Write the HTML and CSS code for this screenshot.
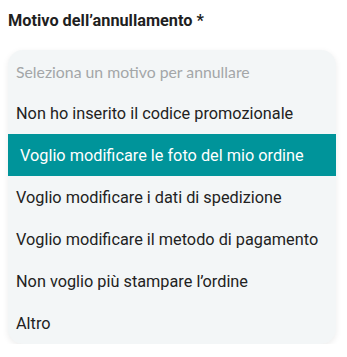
FILE: index.html
```html
<!DOCTYPE html>
<html lang="it">
<head>
<meta charset="utf-8">
<link rel="stylesheet" href="styles.css">
</head>
<body>
<div class="field">
  <div class="label">Motivo dell’annullamento *</div>
  <ul class="menu">
    <li class="option placeholder">Seleziona un motivo per annullare</li>
    <li class="option">Non ho inserito il codice promozionale</li>
    <li class="option selected">Voglio modificare le foto del mio ordine</li>
    <li class="option">Voglio modificare i dati di spedizione</li>
    <li class="option">Voglio modificare il metodo di pagamento</li>
    <li class="option">Non voglio più stampare l’ordine</li>
    <li class="option">Altro</li>
  </ul>
</div>
</body>
</html>
```
FILE: styles.css
```css
html, body {
  margin: 0;
  padding: 0;
  background: #ffffff;
}
body {
  font-family: Roboto, "Liberation Sans", sans-serif;
  color: #222222;
}
.field {
  padding: 11px 11px 0 8px;
}
.label {
  font-size: 16.3px;
  font-weight: 700;
  line-height: 20px;
  color: #1f1f1f;
}
.menu {
  list-style: none;
  margin: 19px 0 0 0;
  padding: 0;
  background: #f3f6f7;
  border-radius: 15px;
  box-shadow: 0 2px 6px rgba(0, 0, 0, 0.08);
  overflow: hidden;
}
.option {
  height: 42px;
  display: flex;
  align-items: center;
  padding-left: 8px;
  font-size: 16.3px;
  color: #222222;
}
.placeholder {
  font-family: Lato, "Liberation Sans", sans-serif;
  font-size: 15.8px;
  color: #a3a6a8;
}
.selected {
  background: #00949a;
  color: #ffffff;
  padding-left: 12px;
}
```
